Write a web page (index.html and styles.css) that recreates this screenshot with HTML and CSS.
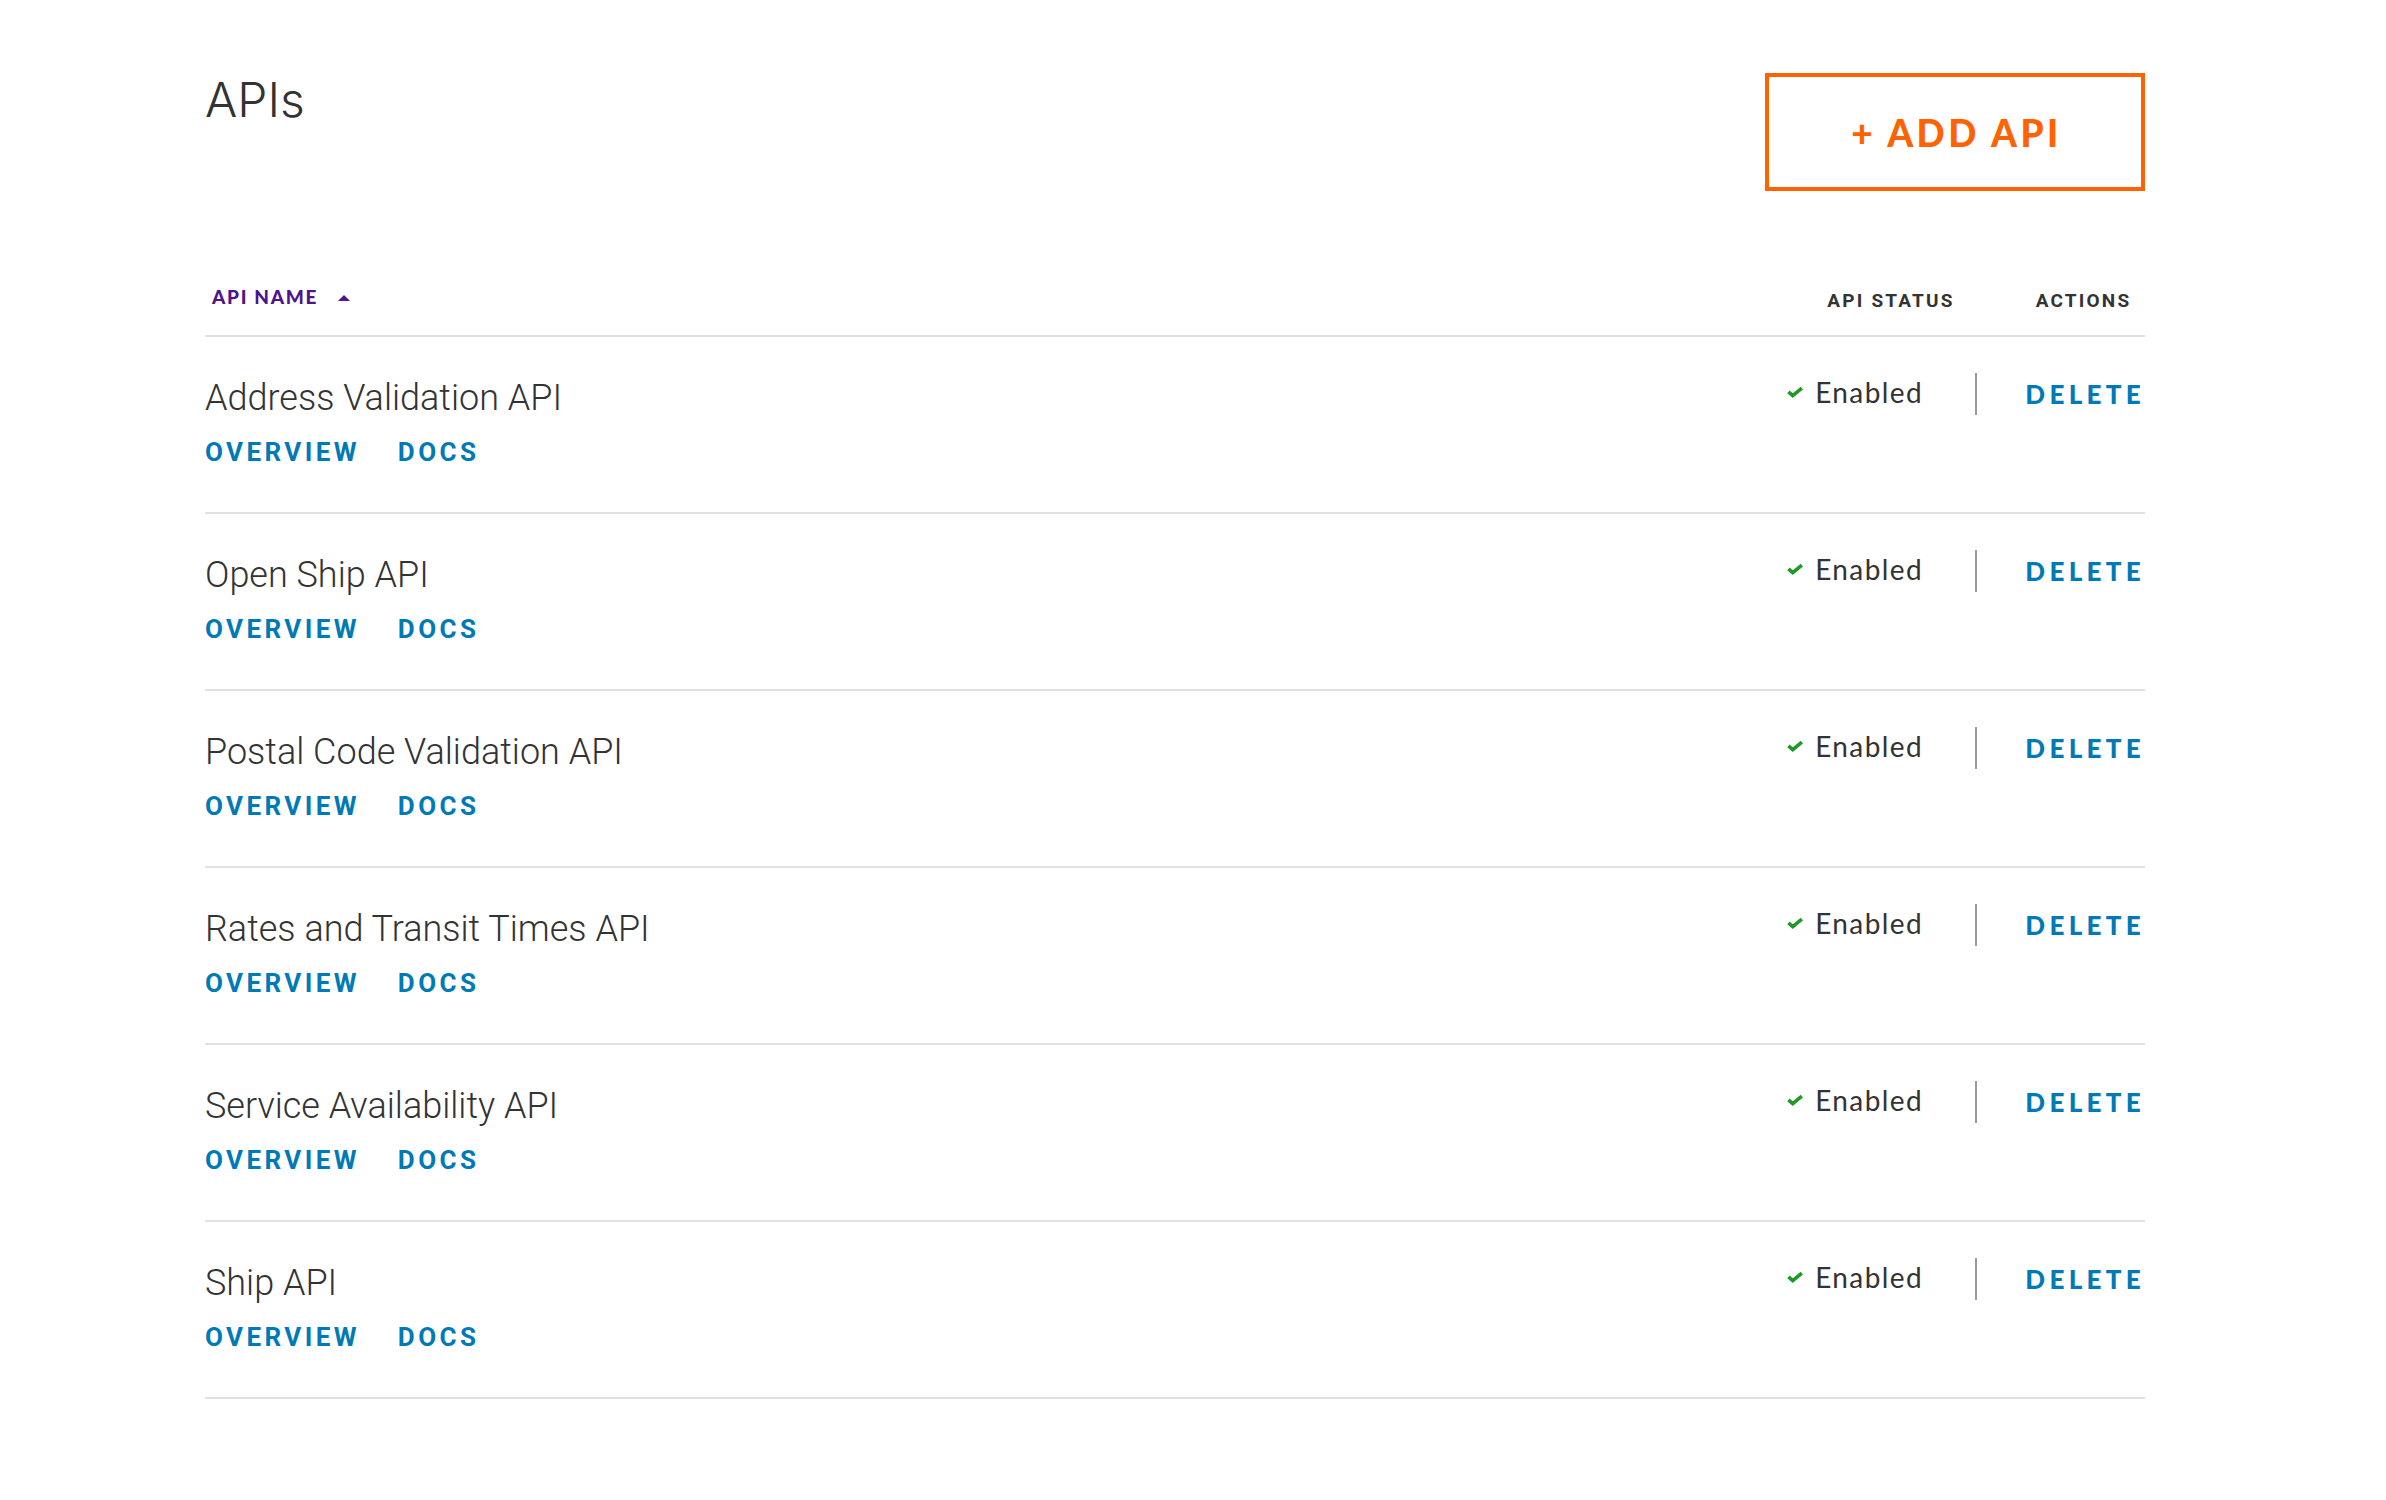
FILE: index.html
```html
<!DOCTYPE html>
<html lang="en">
<head>
<meta charset="utf-8">
<title>APIs</title>
<link rel="stylesheet" href="styles.css">
</head>
<body>
<div class="page">
  <div class="top">
    <h1 class="title">APIs</h1>
    <button class="add-btn">+ ADD API</button>
  </div>
  <div class="table">
    <div class="thead">
      <div class="th-name">API NAME <span class="sort-tri"></span></div>
      <div class="th-right">
        <div class="th-status">API STATUS</div>
        <div class="th-actions">ACTIONS</div>
      </div>
    </div>

    <div class="row">
      <div class="cell-name">
        <div class="api-name">Address Validation API</div>
        <div class="links"><a class="link">OVERVIEW</a><a class="link">DOCS</a></div>
      </div>
      <div class="cell-right">
        <div class="status"><svg class="check" viewBox="0 0 18 12"><path d="M1.6 5.8 L6.4 10 L16.6 1.6" fill="none" stroke="#1f9a26" stroke-width="4" stroke-linejoin="miter"/></svg><span class="status-text">Enabled</span></div>
        <div class="divider"></div>
        <div class="action"><a class="delete">DELETE</a></div>
      </div>
    </div>

    <div class="row">
      <div class="cell-name">
        <div class="api-name">Open Ship API</div>
        <div class="links"><a class="link">OVERVIEW</a><a class="link">DOCS</a></div>
      </div>
      <div class="cell-right">
        <div class="status"><svg class="check" viewBox="0 0 18 12"><path d="M1.6 5.8 L6.4 10 L16.6 1.6" fill="none" stroke="#1f9a26" stroke-width="4" stroke-linejoin="miter"/></svg><span class="status-text">Enabled</span></div>
        <div class="divider"></div>
        <div class="action"><a class="delete">DELETE</a></div>
      </div>
    </div>

    <div class="row">
      <div class="cell-name">
        <div class="api-name">Postal Code Validation API</div>
        <div class="links"><a class="link">OVERVIEW</a><a class="link">DOCS</a></div>
      </div>
      <div class="cell-right">
        <div class="status"><svg class="check" viewBox="0 0 18 12"><path d="M1.6 5.8 L6.4 10 L16.6 1.6" fill="none" stroke="#1f9a26" stroke-width="4" stroke-linejoin="miter"/></svg><span class="status-text">Enabled</span></div>
        <div class="divider"></div>
        <div class="action"><a class="delete">DELETE</a></div>
      </div>
    </div>

    <div class="row">
      <div class="cell-name">
        <div class="api-name">Rates and Transit Times API</div>
        <div class="links"><a class="link">OVERVIEW</a><a class="link">DOCS</a></div>
      </div>
      <div class="cell-right">
        <div class="status"><svg class="check" viewBox="0 0 18 12"><path d="M1.6 5.8 L6.4 10 L16.6 1.6" fill="none" stroke="#1f9a26" stroke-width="4" stroke-linejoin="miter"/></svg><span class="status-text">Enabled</span></div>
        <div class="divider"></div>
        <div class="action"><a class="delete">DELETE</a></div>
      </div>
    </div>

    <div class="row">
      <div class="cell-name">
        <div class="api-name">Service Availability API</div>
        <div class="links"><a class="link">OVERVIEW</a><a class="link">DOCS</a></div>
      </div>
      <div class="cell-right">
        <div class="status"><svg class="check" viewBox="0 0 18 12"><path d="M1.6 5.8 L6.4 10 L16.6 1.6" fill="none" stroke="#1f9a26" stroke-width="4" stroke-linejoin="miter"/></svg><span class="status-text">Enabled</span></div>
        <div class="divider"></div>
        <div class="action"><a class="delete">DELETE</a></div>
      </div>
    </div>

    <div class="row">
      <div class="cell-name">
        <div class="api-name">Ship API</div>
        <div class="links"><a class="link">OVERVIEW</a><a class="link">DOCS</a></div>
      </div>
      <div class="cell-right">
        <div class="status"><svg class="check" viewBox="0 0 18 12"><path d="M1.6 5.8 L6.4 10 L16.6 1.6" fill="none" stroke="#1f9a26" stroke-width="4" stroke-linejoin="miter"/></svg><span class="status-text">Enabled</span></div>
        <div class="divider"></div>
        <div class="action"><a class="delete">DELETE</a></div>
      </div>
    </div>
  </div>
</div>
</body>
</html>
```

FILE: styles.css
```css
html, body {
  margin: 0;
  padding: 0;
  background: #ffffff;
}

body {
  font-family: "Roboto", "Liberation Sans", sans-serif;
  color: #333333;
}

.page {
  width: 1940px;
  padding-left: 205px;
}

.top {
  display: flex;
  justify-content: space-between;
  align-items: flex-start;
  height: 191px;
}

.title {
  margin: 0;
  padding-top: 71px;
  font-family: "Inter", "Liberation Sans", sans-serif;
  font-weight: 300;
  font-size: 48px;
  line-height: 58px;
  color: #333333;
}

.add-btn {
  margin-top: 73px;
  width: 380px;
  height: 118px;
  box-sizing: border-box;
  border: 4px solid #ff6200;
  background: #ffffff;
  color: #ff6200;
  font-family: "Lato", "Liberation Sans", sans-serif;
  font-weight: 900;
  font-size: 37px;
  letter-spacing: 3.5px;
  padding: 0 0 0 3px;
}

.thead {
  display: flex;
  align-items: flex-end;
  height: 144px;
  border-bottom: 2px solid #e1e1e1;
}

.th-name {
  flex: 1;
  padding-left: 7px;
  padding-bottom: 28px;
  font-family: "Lato", "Liberation Sans", sans-serif;
  font-weight: 900;
  font-size: 19px;
  line-height: 20px;
  letter-spacing: 1.7px;
  color: #4d148c;
}

.sort-tri {
  display: inline-block;
  width: 0;
  height: 0;
  margin-left: 14px;
  border-left: 6px solid transparent;
  border-right: 6px solid transparent;
  border-bottom: 6px solid #4d148c;
  vertical-align: 3px;
}

.th-right {
  display: flex;
  width: 358px;
  padding-bottom: 24px;
  font-family: "Roboto", "Liberation Sans", sans-serif;
  font-weight: 700;
  font-size: 19px;
  line-height: 20px;
  letter-spacing: 2.2px;
  color: #333333;
}

.th-status {
  margin-left: 24px;
  width: 160px;
  text-align: center;
}

.th-actions {
  margin-left: 51px;
  width: 123px;
  text-align: center;
}

.row {
  display: flex;
  height: 175px;
  border-bottom: 2px solid #e1e1e1;
}

.cell-name {
  flex: 1;
  padding-top: 39px;
}

.api-name {
  font-family: "Roboto", "Liberation Sans", sans-serif;
  font-weight: 300;
  font-size: 36px;
  line-height: 44px;
  color: #333333;
}

.links {
  display: flex;
  gap: 38px;
  margin-top: 17px;
}

.link {
  font-family: "Roboto", "Liberation Sans", sans-serif;
  font-weight: 700;
  font-size: 26px;
  line-height: 30px;
  letter-spacing: 3.4px;
  color: #007ab7;
}

.cell-right {
  display: flex;
  align-items: flex-start;
  width: 358px;
}

.status {
  display: flex;
  align-items: flex-start;
  width: 136px;
  margin-top: 38px;
}

.check {
  width: 18px;
  height: 12px;
  margin-top: 11px;
  margin-right: 12px;
}

.status-text {
  font-family: "Lato", "Liberation Sans", sans-serif;
  font-weight: 400;
  font-size: 28px;
  line-height: 34px;
  letter-spacing: 1.4px;
  color: #333333;
}

.divider {
  width: 2px;
  height: 42px;
  margin-top: 36px;
  margin-left: 52px;
  background: #9a9a9a;
}

.action {
  flex: 1;
  margin-top: 41px;
  text-align: right;
}

.delete {
  font-family: "Lato", "Liberation Sans", sans-serif;
  font-weight: 900;
  font-size: 26px;
  line-height: 32px;
  letter-spacing: 4.3px;
  color: #007ab7;
}
```
